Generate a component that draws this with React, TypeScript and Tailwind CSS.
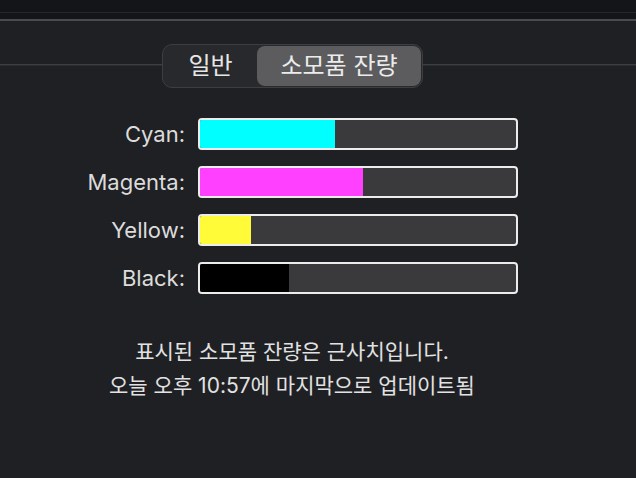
import React from "react";

const bars = [
  { label: "Cyan:", color: "bg-[#00ffff]", w: 135 },
  { label: "Magenta:", color: "bg-[#ff40ff]", w: 163 },
  { label: "Yellow:", color: "bg-[#fffb38]", w: 51 },
  { label: "Black:", color: "bg-[#000000]", w: 89 },
];

export default function App() {
  return (
    <div
      className="w-[636px] h-[478px] bg-[#1f2023] flex flex-col overflow-hidden text-[#dedede]"
      style={{ fontFamily: 'Inter, "Noto Sans CJK KR", sans-serif' }}
    >
      <div className="h-[12px] bg-[#141518]" />
      <div className="h-[1px] bg-[#26272a]" />
      <div className="h-[6px] bg-[#141518]" />
      <div className="h-[2px] bg-[#4b4b4e]" />

      <div className="flex items-start mt-[23px]">
        <div className="w-[162px] mt-[20px] h-[2px] border-t border-t-[#3d3e41] border-b border-b-[#2b2c2f]" />
        <div className="w-[261px] h-[44px] rounded-[10px] border border-[#3d3e41] bg-[#28292c] flex items-center p-[1px]">
          <div className="w-[93px] h-full flex items-center justify-center text-[24px] font-normal text-[#e6e6e6]">
            일반
          </div>
          <div className="flex-1 h-[40px] rounded-[8px] bg-[#5c5c5f] flex items-center justify-center text-[24px] font-normal text-[#ececec]">
            소모품 잔량
          </div>
        </div>
        <div className="flex-1 mt-[20px] h-[2px] border-t border-t-[#3d3e41] border-b border-b-[#2b2c2f]" />
      </div>

      <div className="mt-[30px] grid grid-cols-[185px_320px] gap-y-[16px] gap-x-[13px]">
        {bars.map((b) => (
          <React.Fragment key={b.label}>
            <div className="h-[32px] flex items-center justify-end text-[22px] text-[#dcdcdc]">
              {b.label}
            </div>
            <div className="h-[32px] rounded-[4px] border-2 border-[#ececec] bg-[#3a3a3c] overflow-hidden flex">
              <div className={`h-full ${b.color}`} style={{ width: b.w }} />
            </div>
          </React.Fragment>
        ))}
      </div>

      <div className="mt-[41px] w-[584px] flex flex-col items-center text-[21px] leading-[34px] text-[#e2e2e2]">
        <div>표시된 소모품 잔량은 근사치입니다.</div>
        <div>오늘 오후 10:57에 마지막으로 업데이트됨</div>
      </div>
    </div>
  );
}
